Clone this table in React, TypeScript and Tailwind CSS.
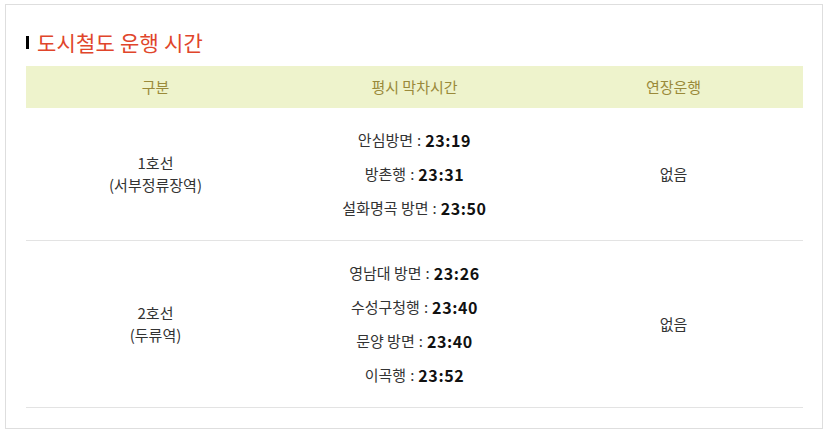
import React from "react";

const rows = [
  {
    line: "1호선",
    station: "(서부정류장역)",
    times: [
      ["안심방면", "23:19"],
      ["방촌행", "23:31"],
      ["설화명곡 방면", "23:50"],
    ],
    ext: "없음",
  },
  {
    line: "2호선",
    station: "(두류역)",
    times: [
      ["영남대 방면", "23:26"],
      ["수성구청행", "23:40"],
      ["문양 방면", "23:40"],
      ["이곡행", "23:52"],
    ],
    ext: "없음",
  },
];

export default function App() {
  return (
    <div
      className="w-[829px] h-[433px] bg-white pt-[4px] pl-[5px]"
      style={{ fontFamily: '"Noto Sans CJK KR", "Noto Sans", sans-serif' }}
    >
      <div className="w-[818px] h-[425px] border border-[#dedede] pl-[20px] pr-[18px]">
        <div className="flex items-center h-[61px] pt-[14px]">
          <span className="w-[3px] h-[13px] bg-black mr-[8px]" />
          <h2 className="text-[21px] leading-none text-[#e0452b] tracking-[0.2px]">도시철도 운행 시간</h2>
        </div>
        <div className="w-[777px]">
          <div className="grid grid-cols-3 h-[42px] bg-[#eef3cc] text-[15px] text-[#9a8a3a] items-center text-center">
            <div>구분</div>
            <div>평시 막차시간</div>
            <div>연장운행</div>
          </div>
          {rows.map((r) => (
            <div
              key={r.line}
              className="grid grid-cols-3 border-b border-[#e3e3e3] py-[15px] text-[15px] text-[#333] items-center text-center"
            >
              <div className="leading-[22px]">
                <div>{r.line}</div>
                <div>{r.station}</div>
              </div>
              <div>
                {r.times.map(([n, t]) => (
                  <div key={n} className="flex items-center justify-center h-[34px] gap-[4px]">
                    <span>{n}</span>
                    <span>:</span>
                    <b className="font-bold text-[16px] tracking-[0.6px] text-[#111]">{t}</b>
                  </div>
                ))}
              </div>
              <div>{r.ext}</div>
            </div>
          ))}
        </div>
      </div>
    </div>
  );
}
